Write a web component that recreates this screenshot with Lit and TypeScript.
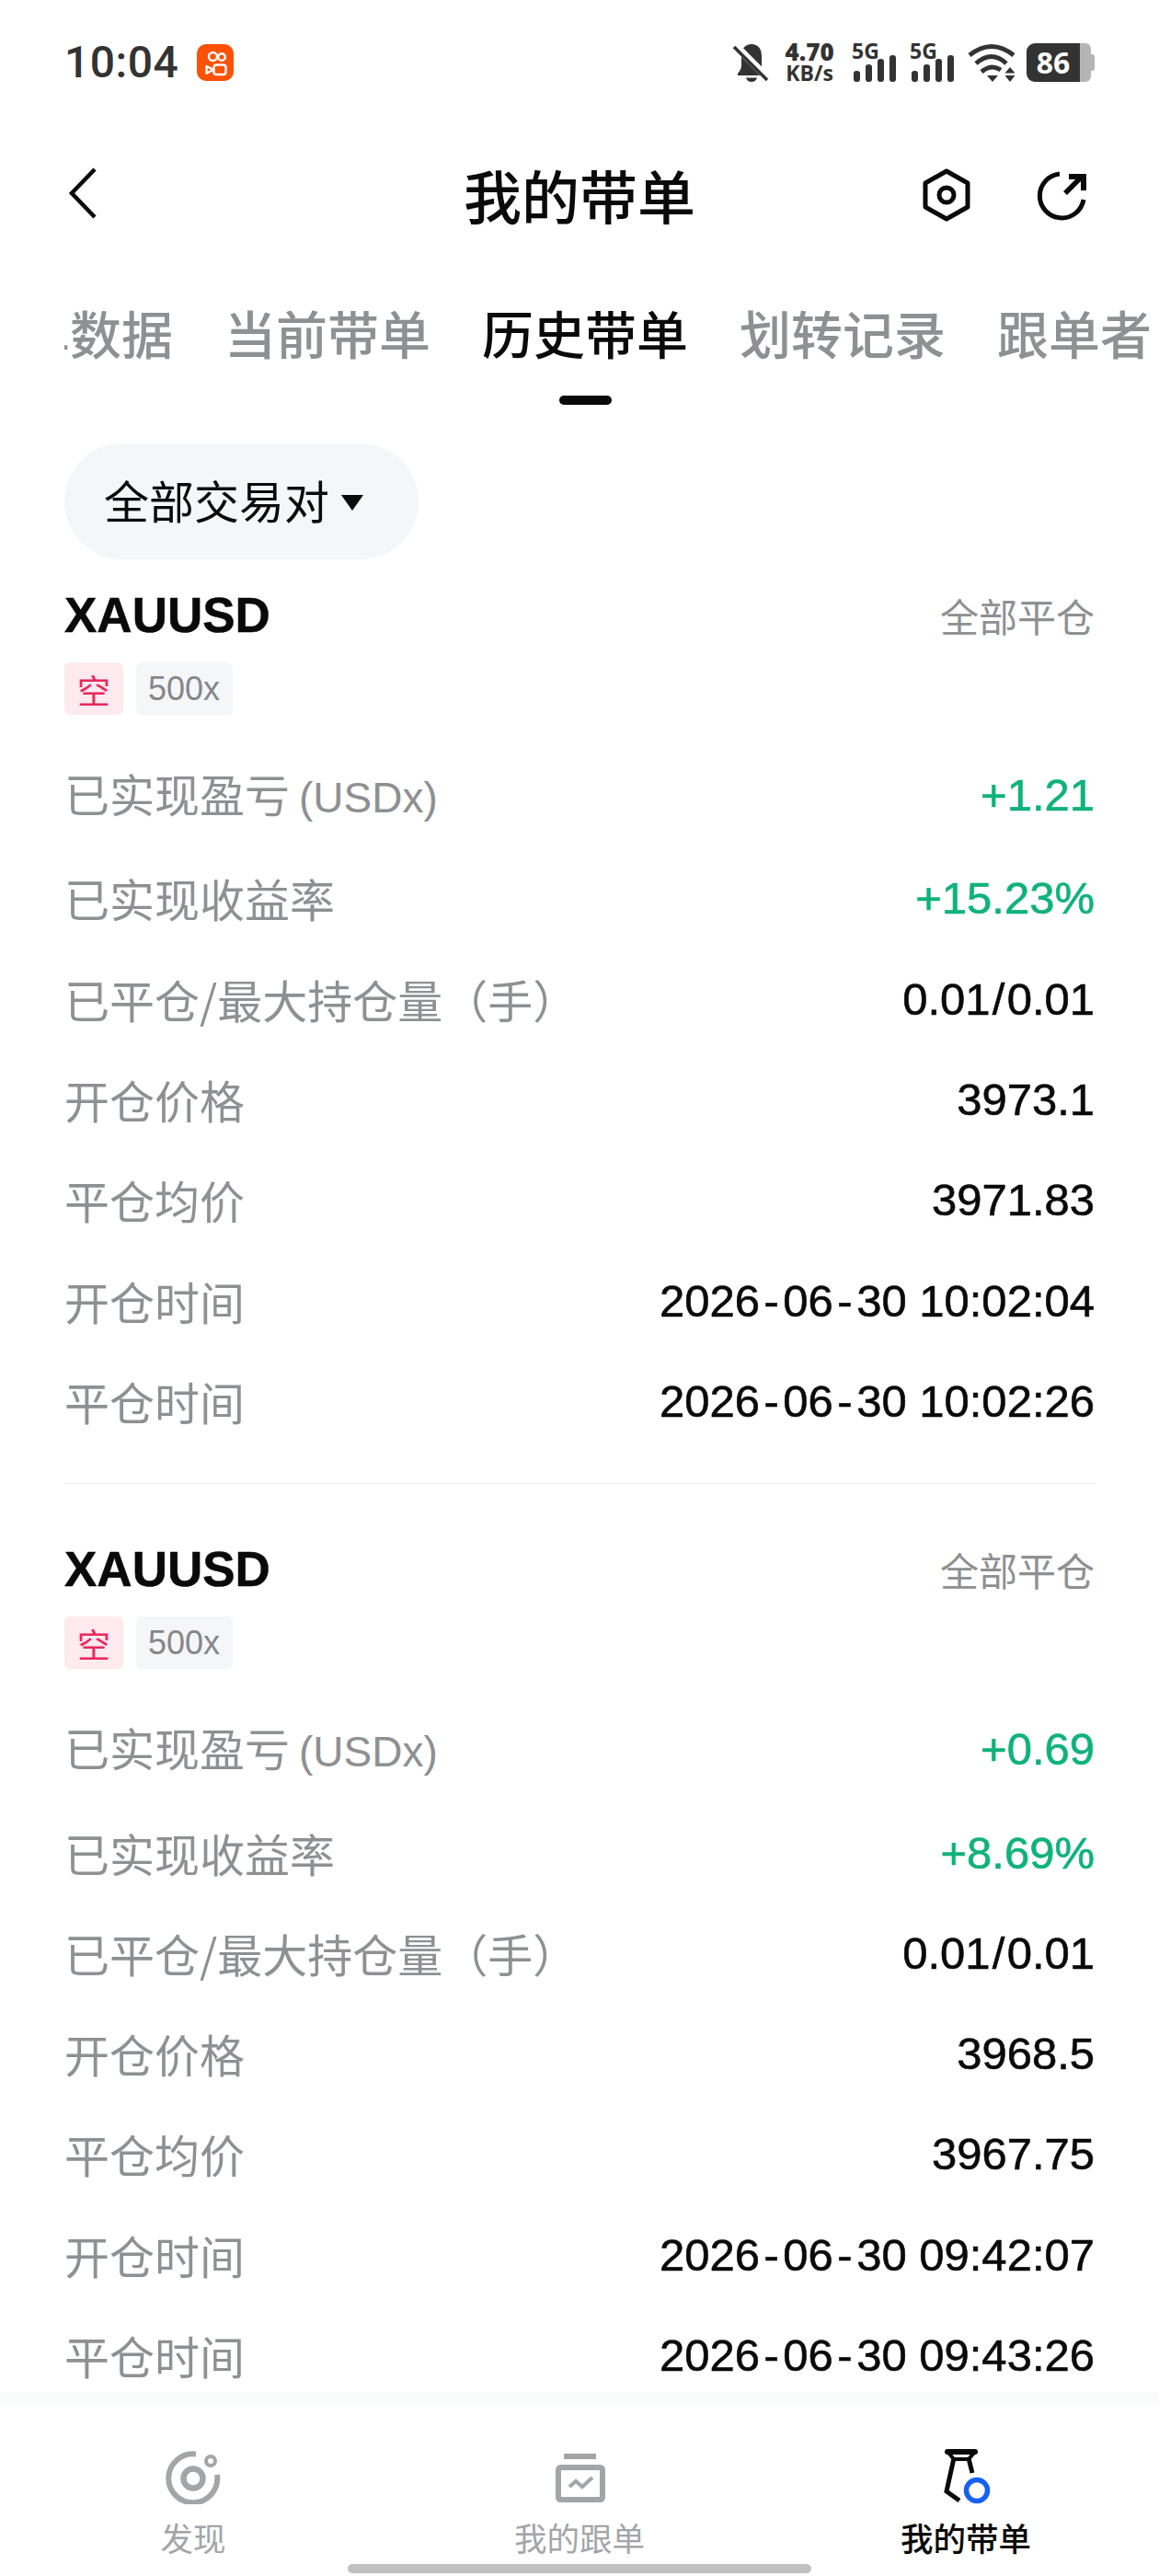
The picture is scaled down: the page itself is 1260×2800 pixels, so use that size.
import { LitElement, html, css, svg } from "lit";
import { customElement } from "lit/decorators.js";

interface Row { label: string; unit?: string; value: string; up?: boolean }
interface Order { rows: Row[] }

const orders: Order[] = [
  { rows: [
    { label: "已实现盈亏", unit: "(USDx)", value: "+1.21", up: true },
    { label: "已实现收益率", value: "+15.23%", up: true },
    { label: "已平仓/最大持仓量（手）", value: "0.01/0.01" },
    { label: "开仓价格", value: "3973.1" },
    { label: "平仓均价", value: "3971.83" },
    { label: "开仓时间", value: "2026-06-30 10:02:04" },
    { label: "平仓时间", value: "2026-06-30 10:02:26" },
  ] },
  { rows: [
    { label: "已实现盈亏", unit: "(USDx)", value: "+0.69", up: true },
    { label: "已实现收益率", value: "+8.69%", up: true },
    { label: "已平仓/最大持仓量（手）", value: "0.01/0.01" },
    { label: "开仓价格", value: "3968.5" },
    { label: "平仓均价", value: "3967.75" },
    { label: "开仓时间", value: "2026-06-30 09:42:07" },
    { label: "平仓时间", value: "2026-06-30 09:43:26" },
  ] },
];

const bars = svg`<rect x="0" y="17" width="7" height="12" rx="3"/><rect x="13" y="10" width="7" height="19" rx="3"/><rect x="26" y="4" width="7" height="25" rx="3"/><rect x="39" y="0" width="7" height="29" rx="3"/>`;

const valueParts = (v: string) =>
  v.split(/([-/])/).map((p) =>
    p === "-" ? html`<span class="hy">-</span>` : p === "/" ? html`<span class="sl">/</span>` : p
  );

@customElement("app-root")
export class AppRoot extends LitElement {
  static styles = css`
    :host { display: block; width: 1260px; height: 2800px; background: #fff; font-family: "Liberation Sans", "Noto Sans CJK SC", sans-serif; color: #0a0a0a; }
    .page { height: 2800px; display: flex; flex-direction: column; overflow: hidden; }
    .status { height: 136px; flex: none; padding: 0 70px; display: flex; align-items: center; color: #333; }
    .time { font: 500 48px/50px Roboto, sans-serif; width: 144px; letter-spacing: 0.5px; }
    .ks { width: 40px; height: 40px; }
    .st-right { margin-left: auto; display: flex; align-items: center; height: 44px; }
    .bell { width: 40px; height: 42px; margin-right: 16px; }
    .speed { width: 54px; display: flex; flex-direction: column; align-items: center; font-family: "Open Sans", sans-serif; font-weight: 700; margin-right: 19px; }
    .speed b { font-size: 26px; line-height: 22px; }
    .speed i { font-style: normal; font-size: 23px; line-height: 24px; }
    .sig { width: 50px; height: 42px; display: flex; flex-direction: column; margin-right: 13px; }
    .sig span { font: 700 23px/16px "Open Sans", sans-serif; height: 14px; }
    .sig svg { width: 46px; height: 29px; margin: -1px 0 0 2px; fill: #333; }
    .wifi { width: 54px; height: 42px; margin-right: 10px; }
    .batt { width: 74px; height: 42px; display: flex; }
    .batt-main { width: 58px; height: 42px; background: #333; border-radius: 9px 0 0 9px; color: #fff; font: 700 32px/42px "Open Sans", sans-serif; text-align: center; }
    .batt-rest { width: 12px; height: 42px; background: #b5b5b5; border-radius: 0 6px 6px 0; }
    .batt-nub { width: 4px; height: 18px; margin-top: 12px; background: #b5b5b5; border-radius: 0 3px 3px 0; }

    .head { height: 152px; flex: none; padding: 0 76px 0 70px; display: grid; grid-template-columns: 1fr auto 1fr; align-items: center; }
    .back { width: 40px; height: 56px; margin-top: -5px; }
    .title { text-align: center; font: 500 63px/76px "Noto Sans CJK SC", sans-serif; padding: 0 0 2px 6px; }
    .actions { display: flex; justify-content: flex-end; align-items: center; gap: 69px; }
    .hex { width: 56px; height: 62px; }
    .share { width: 58px; height: 58px; margin-top: 2px; }

    .tabs-clip { height: 152px; flex: none; margin: 0 8px 0 70px; overflow: hidden; }
    .tabs { display: flex; gap: 56px; margin-left: -106px; padding-top: 43px; white-space: nowrap; }
    .tab { font: 500 56px/60px "Noto Sans CJK SC", sans-serif; color: #8e9092; display: flex; flex-direction: column; align-items: center; }
    .tab.on { color: #0a0a0a; }
    .ind { width: 57px; height: 10px; border-radius: 5px; margin-top: 39px; }
    .tab.on .ind { background: #0a0a0a; }

    .filter { flex: none; align-self: flex-start; margin: 42px 0 0 70px; width: 385px; height: 126px; border-radius: 63px; background: #f4f6f7; display: flex; align-items: center; padding-left: 43px; box-sizing: border-box; font: 400 49px/60px "Noto Sans CJK SC", sans-serif; }
    .filter span { margin-top: -4px; }
    .tri { width: 24px; height: 17px; margin: 2px 0 0 13px; fill: #0a0a0a; }

    main { flex: 1; min-height: 0; overflow: hidden; padding: 0 70px; }
    .card { padding: 31px 0 33px; margin-bottom: 32px; border-bottom: 1px solid #efefef; }
    .card:last-child { border-bottom: 0; }
    .card-head { display: flex; justify-content: space-between; align-items: center; height: 60px; }
    .sym { font-weight: 700; font-size: 53px; line-height: 60px; -webkit-text-stroke: 0.5px currentColor; }
    .mode { font: 400 42px/60px "Noto Sans CJK SC", sans-serif; color: #8e9092; }
    .tags { display: flex; gap: 14px; margin-top: 21px; height: 57px; }
    .tag { height: 57px; border-radius: 6px; display: flex; align-items: center; justify-content: center; font-size: 36px; }
    .tag.side { width: 64px; background: #feeaef; color: #e9295f; font-family: "Noto Sans CJK SC", sans-serif; }
    .tag.lev { width: 105px; background: #f5f6f7; color: #85878a; padding-right: 1px; box-sizing: border-box; }
    .rows { margin-top: 34px; }
    .row { height: 109.3px; display: flex; justify-content: space-between; align-items: center; }
    .row:first-child { margin-bottom: 3px; }
    .lbl { font: 400 49px/60px "Noto Sans CJK SC", sans-serif; color: #8e9092; margin-top: -3px; }
    .unit { font: 400 46px/60px "Liberation Sans", sans-serif; margin-left: 10px; }
    .val { font-size: 49px; line-height: 60px; -webkit-text-stroke: 0.6px currentColor; margin-top: -3px; }
    .val.up { color: #10b27a; }
    .hy { margin: 0 4.500px; }
    .sl { margin: 0 2.200px; }

    nav { flex: none; height: 200px; box-sizing: border-box; display: flex; flex-direction: column; background: linear-gradient(#fafbfb, #fafbfb 15px, #fff 15px); padding-top: 62px; }
    .items { display: grid; grid-template-columns: repeat(3, 420px); }
    .item { display: flex; flex-direction: column; align-items: center; font: 400 35.500px/40px "Noto Sans CJK SC", sans-serif; color: #a3a5a7; }
    .item.on { color: #0a0a0a; font-weight: 500; }
    .item svg { width: 80px; height: 60px; margin-bottom: 16px; display: block; }
    .pill { width: 504px; height: 10px; border-radius: 5px; background: #c1c1c1; margin: 9px auto 0; }
  `;

  private order(o: Order) {
    return html`<section class="card">
      <div class="card-head"><span class="sym">XAUUSD</span><span class="mode">全部平仓</span></div>
      <div class="tags"><span class="tag side">空</span><span class="tag lev">500x</span></div>
      <div class="rows">
        ${o.rows.map((r) => html`<div class="row"><span class="lbl">${r.label}${r.unit ? html`<span class="unit">${r.unit}</span>` : ""}</span><span class="val ${r.up ? "up" : ""}">${valueParts(r.value)}</span></div>`)}
      </div>
    </section>`;
  }

  render() {
    const tabs = ["带单数据", "当前带单", "历史带单", "划转记录", "跟单者"];
    return html`<div class="page">
      <div class="status">
        <span class="time">10:04</span>
        <svg class="ks" viewBox="0 0 40 40">
          <rect width="40" height="40" rx="10" fill="#fe5108"/>
          <g fill="none" stroke="#fff" stroke-width="2.400" stroke-linejoin="round">
            <circle cx="17.500" cy="13.500" r="4.500"/><circle cx="27" cy="14" r="3.800"/>
            <rect x="18.500" y="22.500" width="13" height="10.500" rx="2.800"/>
            <path d="M10.500 24 L18 27.800 L10.500 31.800z"/>
          </g>
        </svg>
        <div class="st-right">
          <svg class="bell" viewBox="0 0 40 42" fill="#333">
            <path d="M20 1C27 1 31 6 31 14V24C31 28 34 30 36 33V35H5V33C7 30 9 28 9 24V14C9 6 13 1 20 1z"/>
            <path d="M14 37.500h12c-1 3-3 4.500-6 4.500s-5-1.500-6-4.500z"/>
            <path d="M0 0 41 41" stroke="#fff" stroke-width="8"/>
            <path d="M1 4 37 40" stroke="#333" stroke-width="3.500"/>
          </svg>
          <div class="speed"><b>4.70</b><i>KB/s</i></div>
          <div class="sig"><span>5G</span><svg viewBox="0 0 46 29">${bars}</svg></div>
          <div class="sig"><span>5G</span><svg viewBox="0 0 46 29">${bars}</svg></div>
          <svg class="wifi" viewBox="0 0 54 42" fill="none" stroke="#333" stroke-width="5">
            <path d="M2 13Q26 -6 50 13"/>
            <path d="M9 22Q26 7 42 22"/>
            <path d="M15 31Q26 22 36 29"/>
            <path d="M21 35h12l-6 7z" fill="#333" stroke="none"/>
            <path d="M46 26l5.500 6.500H40.500zM40.500 35h11l-5.500 7z" fill="#333" stroke="none"/>
          </svg>
          <div class="batt"><div class="batt-main">86</div><div class="batt-rest"></div><div class="batt-nub"></div></div>
        </div>
      </div>

      <header class="head">
        <svg class="back" viewBox="0 0 40 56" fill="none" stroke="#0a0a0a" stroke-width="4.500"><path d="M33 2 8 28l25 26"/></svg>
        <div class="title">我的带单</div>
        <div class="actions">
          <svg class="hex" viewBox="0 0 56 62" fill="none" stroke="#0a0a0a" stroke-width="5">
            <path d="M28 5 51 18V44L28 57 5 44V18z" stroke-linejoin="round"/>
            <circle cx="28" cy="31" r="8" stroke-width="5"/>
          </svg>
          <svg class="share" viewBox="0 0 58 58" fill="none" stroke="#0a0a0a" stroke-width="5">
            <path d="M26 5A24 24 0 1 0 52 33"/>
            <path d="M32 26 50 8" stroke-width="5.500"/>
            <path d="M36 8H52V23" stroke-width="6"/>
          </svg>
        </div>
      </header>

      <div class="tabs-clip"><div class="tabs">
        ${tabs.map((t, i) => html`<div class="tab ${i === 2 ? "on" : ""}"><span>${t}</span><span class="ind"></span></div>`)}
      </div></div>

      <div class="filter"><span>全部交易对</span><svg class="tri" viewBox="0 0 24 17"><path d="M0 0H24L12 17z"/></svg></div>

      <main>${orders.map((o) => this.order(o))}</main>

      <nav>
        <div class="items">
          <div class="item">
            <svg viewBox="-40 -30 80 60" fill="none" stroke="#a3a5a7">
              <path d="M3 -24.500A26.500 26.500 0 1 0 26 -2" stroke-width="6"/>
              <circle cx="0" cy="2" r="10.500" stroke-width="6.500"/>
              <circle cx="19" cy="-17" r="5" stroke-width="4"/>
            </svg>发现</div>
          <div class="item">
            <svg viewBox="-40 -30 80 60">
              <rect x="-17" y="-25" width="35" height="6" fill="#a3a5a7"/>
              <rect x="-23" y="-10" width="48" height="35" rx="2.500" fill="none" stroke="#a3a5a7" stroke-width="6"/>
              <path d="M-11 11-4 5 3 11 14 1" fill="none" stroke="#a3a5a7" stroke-width="4"/>
            </svg>我的跟单</div>
          <div class="item on">
            <svg viewBox="-40 -30 80 60" fill="none">
              <path d="M-20 -27H10" stroke="#0a0a0a" stroke-width="6" stroke-linecap="round"/>
              <path d="M-19 -26-13 -19H3L9 -26" stroke="#0a0a0a" stroke-width="4"/>
              <path d="M-13 -20-21 16-7 26M3 -20 7 -4" stroke="#0a0a0a" stroke-width="5"/>
              <circle cx="12" cy="15" r="11.500" stroke="#1660f5" stroke-width="5.500"/>
            </svg>我的带单</div>
        </div>
        <div class="pill"></div>
      </nav>
    </div>`;
  }
}
